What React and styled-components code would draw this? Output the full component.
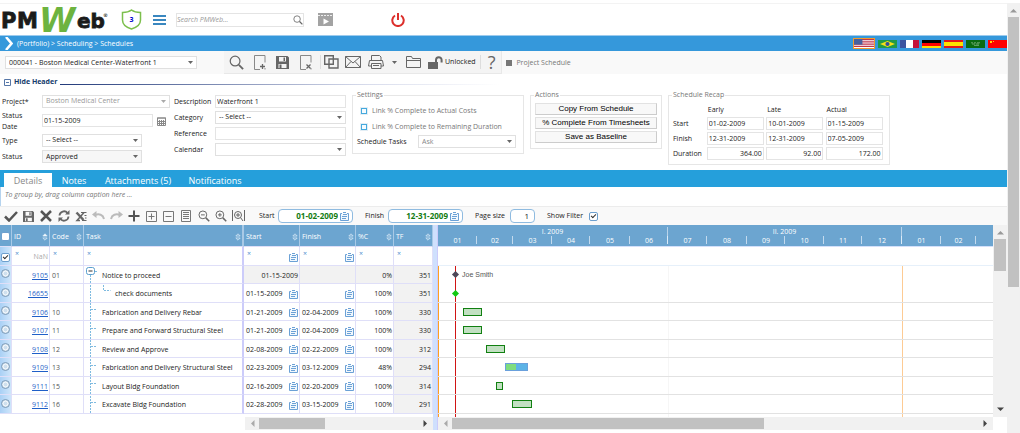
import React from "react";
import styled, { createGlobalStyle } from "styled-components";

const Global = createGlobalStyle`
  *, *::before, *::after { box-sizing: border-box; }
  body { margin: 0; background: #fff; overflow: hidden; }
  body, button, input, select { font: 7px/10px "Open Sans", "Noto Sans", sans-serif; color: #222; }
  table { border-collapse: collapse; }
`;

/* ---------- data ---------- */

const tasks = [
  { id: 9105, code: "01", name: "Notice to proceed", start: "01-15-2009", finish: "", pct: "0%", tf: 351, summary: true },
  { id: 16655, code: "", name: "check documents", start: "01-15-2009", finish: "", pct: "100%", tf: 351, child: true },
  { id: 9106, code: "10", name: "Fabrication and Delivery Rebar", start: "01-21-2009", finish: "02-04-2009", pct: "100%", tf: 330 },
  { id: 9107, code: "11", name: "Prepare and Forward Structural Steel", start: "01-21-2009", finish: "02-04-2009", pct: "100%", tf: 330 },
  { id: 9108, code: "12", name: "Review and Approve", start: "02-08-2009", finish: "02-22-2009", pct: "100%", tf: 312 },
  { id: 9109, code: "13", name: "Fabrication and Delivery Structural Steel", start: "02-23-2009", finish: "03-12-2009", pct: "48%", tf: 294 },
  { id: 9111, code: "15", name: "Layout Bldg Foundation", start: "02-16-2009", finish: "02-20-2009", pct: "100%", tf: 314 },
  { id: 9112, code: "16", name: "Excavate Bldg Foundation", start: "02-28-2009", finish: "03-15-2009", pct: "100%", tf: 291 },
];

const columns = [
  { name: "ID", width: 38, sorted: true },
  { name: "Code", width: 34 },
  { name: "Task", width: 160 },
  { name: "Start", width: 56, date: true },
  { name: "Finish", width: 56, date: true },
  { name: "%C", width: 38 },
  { name: "TF", width: 39 },
];

const DAY = 1.27;
const monthDays = [31, 28, 31, 30, 31, 30, 31, 31, 30, 31, 30, 31, 31, 28];

const dayOf = (date) => {
  const [m, d] = date.split("-").map(Number);
  return monthDays.slice(0, m - 1).reduce((a, b) => a + b, 0) + d - 1;
};
const px = (days) => Math.round(days * DAY);

const months = monthDays.map((n, i) => {
  const from = monthDays.slice(0, i).reduce((a, b) => a + b, 0);
  return {
    label: String((i % 12) + 1).padStart(2, "0"),
    width: px(from + n) - px(from),
    edge: i === 5 || i === 11,
  };
});

/* ---------- icons ---------- */

const Svg = ({ w = 12, h = 12, box, children, ...rest }) => (
  <svg width={w} height={h} viewBox={box || `0 0 ${w} ${h}`} fill="none" stroke="#666" aria-hidden="true" {...rest}>
    {children}
  </svg>
);

const Magnifier = ({ size = 16, mark, stroke = "#666" }) => (
  <Svg w={size} h={size} box="0 0 16 16" stroke={stroke}>
    <circle cx="6.5" cy="6.5" r="5.2" strokeWidth="1.3" />
    <path d="M10.5 10.5L15 15" strokeWidth="2" />
    {mark && <path d={mark} strokeWidth="1.3" />}
  </Svg>
);

const Sheet = ({ mark }) => (
  <Svg w={12} h={15}>
    <path d="M6 14.500H.5V.5h10.500v7M11 14.500v-1.500" stroke="#888" />
    <path d={mark} strokeWidth="1.3" />
  </Svg>
);

const Floppy = ({ size = 13 }) => (
  <Svg w={size} h={size} box="0 0 13 13" stroke="none" fill="#666">
    <path fillRule="evenodd" d="M0 0h11.500l1.500 1.500V13H0zM3 1v4.500h7V1zM2.500 8v4h8V8z" />
    <path d="M7.500 1.500h1.500V5H7.500zM3.500 8.500h2V12h-2z" />
  </Svg>
);

const CalIcon = () => (
  <Svg w={9} h={9} stroke="#6ba1d6">
    <path d="M2 1.500H.5v7h8v-7H7" fill="#f2f8fd" />
    <path d="M3 .5h3M3 2.500h4M2 4.500h5M2 6.500h4" />
  </Svg>
);

const Sort = ({ sorted }) => (
  <Svg w={6} h={8} stroke="#d7e8f6">
    <path d="M.8 3L3 .8 5.200 3z" fill={sorted ? "#fff" : "none"} strokeWidth=".8" />
    <path d="M.8 5L3 7.200 5.200 5z" strokeWidth=".8" />
  </Svg>
);

const Caret = ({ fill = "#666" }) => (
  <Svg w={5} h={3} stroke="none" fill={fill}>
    <path d="M0 0h5L2.500 3z" />
  </Svg>
);

const Arrow = ({ dir, fill = "#444" }) => {
  const turn = { up: 0, right: 90, down: 180, left: 270 }[dir];
  return (
    <Svg w={7} h={7} stroke="none" fill={fill}>
      <path d="M0 5.500h7L3.500 2z" transform={`rotate(${turn} 3.500 3.500)`} />
    </Svg>
  );
};

const flags = [
  { name: "English", art: <><path fill="#fff" d="M0 0h19v8H0z" /><path stroke="#c0354c" d="M0 .5h19M0 2.500h19M0 4.500h19M0 6.500h19" /><path fill="#46609f" d="M0 0h8v5H0z" /></> },
  { name: "Português", art: <><path fill="#1f9a48" d="M0 0h19v8H0z" /><path fill="#f7e017" d="M9.500 1L17 4 9.500 7 2 4z" /><circle cx="9.500" cy="4" r="2.100" fill="#2e4f9b" /></> },
  { name: "Français", art: <><path fill="#3c55a0" d="M0 0h6v8H0z" /><path fill="#fff" d="M6 0h7v8H6z" /><path fill="#c4123a" d="M13 0h6v8h-6z" /></> },
  { name: "Deutsch", art: <><path fill="#000" d="M0 0h19v3H0z" /><path fill="#f00" d="M0 3h19v3H0z" /><path fill="#fd0" d="M0 6h19v2H0z" /></> },
  { name: "Español", art: <><path fill="#e3161b" d="M0 0h19v8H0z" /><path fill="#fde100" d="M0 2h19v4H0z" /></> },
  { name: "العربية", art: <><path fill="#0a6b12" d="M0 0h19v8H0z" /><path stroke="#8fbf92" strokeWidth=".7" d="M5 2.800h2m1 0h2m1 0h3M6 4h3m1 0h3M8 5.400h5" /></> },
  { name: "中文", art: <><path fill="#f00" d="M0 0h19v8H0z" /><path fill="#fd0" d="M2 1h2v2H2zM5 1h1v1H5z" /></> },
];

/* ---------- layout ---------- */

const Shell = styled.div`
  display: flex;
  min-height: 100vh;
  padding-top: 3px;
`;

const Main = styled.main`
  flex: 1;
  min-width: 0;
  border-top: 1px solid #f3f3f3;
`;

const Row = styled.div`
  display: flex;
  align-items: center;
  gap: ${(p) => p.$gap || 0}px;
`;

const TopBar = styled.header`
  display: flex;
  align-items: center;
  height: 31px;
  padding-left: 2px;
`;

const LogoSvg = styled.svg`
  flex: none;
  overflow: visible;
`;

const Shield = styled.span`
  display: grid;
  place-items: center;
  margin: 0 11px 0 13px;
  font-weight: 700;
  color: #00c;
  > * { grid-area: 1 / 1; }
`;

const IconButton = styled.button`
  display: grid;
  place-items: center;
  flex: none;
  width: ${(p) => p.$w || 16}px;
  height: 16px;
  padding: 0;
  border: 0;
  background: none;
  svg { display: block; }
`;

const SearchBox = styled.label`
  display: flex;
  align-items: center;
  width: 128px;
  height: 14px;
  margin: 0 13px 0 10px;
  border: 1px solid #e4e4e4;
  input {
    flex: 1;
    min-width: 0;
    border: 0;
    padding: 0;
    background: none;
    font-style: italic;
    &::placeholder { color: #999; }
  }
`;

const Power = styled.button`
  display: grid;
  margin-left: 58px;
  padding: 0;
  border: 0;
  background: none;
`;

const CrumbBar = styled.nav`
  display: flex;
  align-items: center;
  gap: 4px;
  height: 16px;
  padding-left: 5px;
  border-top: 1px solid #9ccbee;
  background: #3598db;
  color: #fff;
  white-space: nowrap;
  a { color: inherit; text-decoration: none; }
`;

const Flags = styled.div`
  display: flex;
  align-items: center;
  gap: 3px;
  margin-left: auto;
  overflow: hidden;
`;

const Flag = styled.button`
  flex: none;
  padding: 0;
  border: ${(p) => (p.$on ? "1px solid #f39a2b" : 0)};
  background: none;
  svg { display: block; }
`;

const RecordBar = styled.div`
  display: flex;
  align-items: center;
  height: 23px;
  padding-left: 5px;
  background: #f9f9f9;
`;

const RecordTools = styled.div`
  display: flex;
  align-items: center;
  height: 23px;
  margin-left: 27px;
  padding: 0 6px 0 4px;
  background: #f4f4f4;
  border: solid #e8e8e8;
  border-width: 0 1px 1px 0;
`;

const ToolSep = styled.span`
  width: 1px;
  height: 14px;
  background: #ddd;
`;

const Help = styled.button`
  margin-left: 4px;
  padding: 0 0 0 7px;
  border: 0;
  border-left: 1px solid #ddd;
  background: none;
  color: #666;
  font-size: 18px;
  line-height: 14px;
`;

const ViewName = styled.span`
  display: flex;
  align-items: center;
  gap: 4px;
  margin-left: 4px;
  color: #777;
  white-space: nowrap;
  &::before { content: ""; width: 6px; height: 6px; background: #777; }
`;

const HideHeader = styled.button`
  display: flex;
  align-items: center;
  gap: 3px;
  width: 500px;
  height: 16px;
  padding: 0 0 0 4px;
  border: 0;
  background: none;
  color: #123a6b;
  font-weight: 700;
  white-space: nowrap;
  &::after {
    content: "";
    flex: 1;
    height: 1px;
    margin-top: 5px;
    background: linear-gradient(90deg, #223a7a, #d8dcec 70%, #fff);
  }
`;

const Form = styled.form`
  display: flex;
  align-items: flex-start;
  height: 80px;
  padding: 1px 0 0 2px;
`;

const Fields = styled.div`
  display: grid;
  grid-template-columns: ${(p) => p.$cols};
  grid-template-rows: ${(p) => p.$rows};
  grid-auto-rows: 16px;
  align-items: center;
  margin-right: ${(p) => p.$after}px;
  padding-top: 2px;
  label { white-space: ${(p) => (p.$wrap ? "normal" : "nowrap")}; line-height: 11px; }
`;

const DateLabel = styled.label`
  width: 24px;
`;

const Input = styled.input`
  width: ${(p) => (p.$w ? `${p.$w}px` : "100%")};
  height: 13px;
  padding: 0 1px;
  border: 1px solid #e4e4e4;
  background: #fff;
  text-align: ${(p) => (p.$right ? "right" : "left")};
`;

const SelectWrap = styled.span`
  display: grid;
  align-items: center;
  width: ${(p) => (p.$w ? `${p.$w}px` : "100%")};
  > * { grid-area: 1 / 1; }
  > svg { justify-self: end; margin-right: 4px; pointer-events: none; }
  select {
    appearance: none;
    width: 100%;
    height: 13px;
    padding: 0 3px;
    border: 1px solid #e0e0e0;
    border-radius: 0;
    background: ${(p) => (p.$grey ? "#f7f7f7" : "#fff")};
    color: ${(p) => p.$color || "#222"};
  }
`;

const Select = ({ id, value, label, w, color, grey }) => (
  <SelectWrap $w={w} $color={color} $grey={grey}>
    <select id={id} aria-label={label} defaultValue={value}>
      <option>{value}</option>
    </select>
    <Caret fill={color === "#999" ? "#aaa" : "#666"} />
  </SelectWrap>
);

const Group = styled.fieldset`
  display: flex;
  flex-direction: column;
  min-width: 0;
  width: ${(p) => p.$w}px;
  height: ${(p) => p.$h}px;
  margin: 0 6px 0 0;
  padding: 4px 4px 0;
  border: 1px solid #e6e6e6;
  legend { padding: 0 1px; margin-left: -1px; color: #777; height: 8px; line-height: 8px; }
`;

const CheckLabel = styled.label`
  display: flex;
  align-items: center;
  gap: 5px;
  height: 16px;
  padding-left: 4px;
  color: #777;
  white-space: nowrap;
  input {
    appearance: none;
    width: 6px;
    height: 6px;
    margin: 0;
    border: 1px solid #45a9dd;
    background: #f4fbff;
    outline: 1px solid #e3eef5;
  }
`;

const TasksLabel = styled.label`
  width: 61px;
  white-space: nowrap;
`;

const ActionButton = styled.button`
  height: 12px;
  margin-bottom: 2px;
  padding: 0;
  border: 1px solid #ccc;
  border-top-color: #e2e2e2;
  border-left-color: #e2e2e2;
  background: #f8f8f8;
  color: #000;
  font: 8px/10px "Liberation Sans", Arial, sans-serif;
  white-space: nowrap;
`;

const Recap = styled.table`
  th { padding: 0; font-weight: 400; text-align: left; }
  th:first-child { width: 35px; }
  th + th { padding-left: 1px; }
  td { width: 60px; height: 15px; padding: 0; }
  thead th { height: 13px; }
`;

const Tabs = styled.div`
  display: flex;
  align-items: flex-end;
  height: 17px;
  padding-left: 4px;
  background: #259fdb;
`;

const Tab = styled.button`
  width: ${(p) => p.$w}px;
  height: 14px;
  padding: 0;
  border: 0;
  background: ${(p) => (p.$on ? "#fff" : "none")};
  color: ${(p) => (p.$on ? "#888" : "#fff")};
  font-size: 9px;
  line-height: 16px;
  white-space: nowrap;
`;

const GroupHint = styled.div`
  height: 19px;
  padding: 3px 4px;
  border-left: 1px solid #b5d3ee;
  color: #777;
  font-style: italic;
`;

const GridTools = styled.div`
  display: flex;
  align-items: center;
  height: 19px;
  padding-left: 3px;
  border-top: 1px solid #ececec;
  background: #f9f9f9;
  white-space: nowrap;
`;

const ToolStrip = styled.div`
  display: flex;
  justify-content: space-between;
  width: 244px;
  margin-right: 12px;
`;

const ToolLabel = styled.label`
  width: ${(p) => p.$w}px;
`;

const Picker = styled.span`
  display: flex;
  align-items: center;
  width: ${(p) => p.$w || 75}px;
  height: 14px;
  margin-right: 12px;
  padding: 0 3px;
  border: 1px solid #8fbbe0;
  border-radius: 4px;
  background: #fff;
  input {
    flex: 1;
    min-width: 0;
    padding: 0 2px 0 0;
    border: 0;
    background: none;
    font-size: 8px;
    text-align: right;
    color: ${(p) => (p.$plain ? "#222" : "#127c12")};
    font-weight: ${(p) => (p.$plain ? 400 : 700)};
  }
`;

const Tick = styled.input`
  appearance: none;
  display: grid;
  place-items: center;
  width: 9px;
  height: 9px;
  margin: 0;
  border: 1px solid #6c9fce;
  border-radius: 2px;
  background: #fff;
  &:checked::after {
    content: "";
    width: 5px;
    height: 3px;
    border: solid #333;
    border-width: 0 0 1px 1px;
    rotate: -45deg;
    margin-bottom: 1px;
  }
`;

const Planner = styled.div`
  display: flex;
`;

const Pane = styled.div`
  flex: ${(p) => (p.$grow ? 1 : "none")};
  min-width: 0;
  overflow: hidden;
`;

const TaskTable = styled.table`
  width: 433px;
  table-layout: fixed;
  border-collapse: separate;
  border-spacing: 0;

  th, td {
    padding: 2px 1px 0 2px;
    overflow: hidden;
    white-space: nowrap;
    text-align: left;
    font-weight: 400;
    border-right: 1px solid #dfdff8;
    border-bottom: 1px solid #dfdff8;
  }
  tr > :nth-child(4) { border-right: 2px solid #ccccfa; }
  tr > :first-child { padding: 2px 1px 0; }
  thead tr:first-child { height: 22px; }
  thead tr:first-child th { background: #6ca5d0; color: #fff; border-right-color: #a8c9e6; }
  thead tr + tr { height: 19px; }
  tbody tr { height: 18px; }
  tbody tr:nth-child(even) { height: 19px; }
  tbody td:nth-child(3) { color: #555; }
  tbody td:nth-child(2), tbody td:nth-child(7), tbody td:nth-child(8) { text-align: right; }
  tbody td:last-child { background: #f2f2f2; }
  tbody td:first-child, thead tr + tr td:first-child { background: linear-gradient(90deg, #a9d0f5, #cfe6fb); }
  tbody tr:first-child td:nth-child(n + 5) { background: #f2f2f2; }
  a { color: #1f5fc8; }
`;

const HeadCell = styled.span`
  display: flex;
  align-items: center;
  justify-content: space-between;
`;

const FilterCell = styled.span`
  display: flex;
  justify-content: space-between;
  align-items: center;
  height: 14px;
  color: #aaa;
  i { align-self: flex-start; color: #4f8fce; font-style: normal; line-height: 7px; padding-left: 1px; }
`;

const TaskName = styled.span`
  display: flex;
  align-items: center;
  height: 15px;
  svg { flex: none; margin-right: 2px; }
`;

const DateCell = styled.span`
  display: flex;
  align-items: center;
  justify-content: ${(p) => (p.$end ? "flex-end" : "space-between")};
`;

const RadioMark = styled.input`
  appearance: none;
  display: block;
  width: 9px;
  height: 9px;
  margin: 0 0 4px;
  border: 1px solid #7f9db9;
  border-radius: 50%;
  background: radial-gradient(#cfe0ee 35%, #f2f7fb 45%, #a9c3da);
`;

const Splitter = styled.div`
  width: 5px;
  background: #cfe0fd;
  border-right: 1px solid #ccccfa;
`;

const TimeHead = styled.div`
  height: 22px;
  background: #6ca5d0;
  border-bottom: 1px solid #d3e0fb;
  color: #fff;
  overflow: hidden;
`;

const Halves = styled.div`
  display: flex;
  height: 11px;
  padding-top: 2px;
  text-align: center;
`;

const Half = styled.span`
  flex: none;
  width: ${(p) => p.$w}px;
  line-height: 9px;
  border-right: 1px solid #b8d3ea;
`;

const Months = styled.div`
  display: flex;
  height: 8px;
  line-height: 9px;
  text-align: center;
`;

const Month = styled.span`
  flex: none;
  padding-left: 1px;
  border-right: 1px solid ${(p) => (p.$edge ? "#dcebf8" : "#c3daee")};
`;

const TimeFilter = styled.div`
  height: 19px;
  border-bottom: 1px solid #e6f0fa;
`;

const Chart = styled.div`
  position: relative;
  height: 151px;
  overflow: hidden;
`;

const Marker = styled.span`
  position: absolute;
  top: 0;
  bottom: 0;
  width: 1px;
  background: ${(p) => p.$color};
`;

const Lanes = styled.div`
  position: relative;
`;

const Lane = styled.div`
  display: flex;
  align-items: center;
  height: 18px;
  border-bottom: 1px solid ${(p) => (p.$line ? "#e2e2e2" : "transparent")};
  &:nth-child(even) { height: 19px; }
`;

const Bar = styled.span`
  display: flex;
  height: 8px;
  border: 1px solid ${(p) => (p.$open ? "#6aa0dc" : "#118011")};
  background: ${(p) => (p.$open ? "#5cb3e6" : "#c2e0c2")};
  > i { background: #7edc7e; }
`;

const Milestone = styled.span`
  width: 5px;
  height: 5px;
  background: ${(p) => p.$color};
  rotate: 45deg;
`;

const Resource = styled.span`
  margin-left: 4px;
  color: #555;
  font-family: "Liberation Sans", Arial, sans-serif;
`;

const HScroll = styled.div`
  display: flex;
  align-items: center;
  justify-content: space-between;
  height: 13px;
  margin: ${(p) => p.$margin};
  padding: 0 4px;
  background: #f1f1f1;
  gap: 3px;
`;

const Thumb = styled.span`
  height: 11px;
  width: ${(p) => p.$w};
  background: #c1c1c1;
  margin-right: auto;
`;

const VScroll = styled.div`
  display: flex;
  flex-direction: column;
  align-items: center;
  flex: none;
  gap: 3px;
  width: ${(p) => p.$w}px;
  height: ${(p) => p.$h};
  padding: 4px 1px;
  background: #f1f1f1;
  > svg { flex: none; }
  > span {
    width: 100%;
    height: ${(p) => p.$thumb};
    margin-bottom: auto;
    background: #c1c1c1;
  }
`;

/* ---------- pieces ---------- */

const Logo = () => (
  <LogoSvg width="106" height="28" viewBox="0 0 106 28" role="img" aria-label="PMWeb">
    <g fontFamily="DejaVu Sans, sans-serif" fontWeight="700">
      <g fontSize="21" fill="#1b1b1b" stroke="#1b1b1b" strokeWidth=".8">
        <text x="-1" y="22">P</text>
        <text x="15" y="22">M</text>
        <text x="75" y="22" fontSize="20">eb</text>
      </g>
      <text x="37" y="26" fontSize="33" fill="#6db33f" fontStyle="italic">W</text>
      <text x="101" y="11" fontSize="5" fill="#333">®</text>
    </g>
  </LogoSvg>
);

const Tree = ({ kind }) => (
  <Svg w={kind === "child" ? 27 : 14} h={19} stroke="#7fbbe0">
    {kind === "root" && (
      <>
        <rect x=".5" y="1.500" width="8" height="7" rx="2" fill="#fff" stroke="#5b9fce" />
        <path d="M2.500 5h4" stroke="#333" />
        <path d="M9 5.500h3M4.500 9v10" strokeDasharray="2 1" />
      </>
    )}
    {kind === "child" && <path d="M4.500 0v19M17.500 0v5.500h7" strokeDasharray="2 1" />}
    {kind === "leaf" && <path d="M4.500 0v19M5 6.500h6" strokeDasharray="2 1" />}
  </Svg>
);

const gridTools = [
  { name: "Apply", icon: <Svg w={14} h={12} stroke="#555"><path d="M1 6.500l4 4L13 2" strokeWidth="2.500" /></Svg> },
  { name: "Save", icon: <Floppy size={11} /> },
  { name: "Delete", icon: <Svg stroke="#555"><path d="M1 1l10 10M11 1L1 11" strokeWidth="2.500" /></Svg> },
  { name: "Refresh", icon: <Svg><path d="M1.500 5.500A4.500 4.500 0 0 1 9.500 3M10.500 6.500A4.500 4.500 0 0 1 2.500 9" strokeWidth="1.800" /><path d="M11.500 0v4.500H7zM.5 12V7.500H5z" fill="#666" stroke="none" /></Svg> },
  { name: "Export", icon: <Svg><path d="M1.500 2.500l7 7.500" strokeWidth="2.500" /><path d="M9 2.500L2 10.500h3" strokeWidth="1.500" /><path d="M6 2.500h5.500M9.500 5.500h2M10 8h1.500M7 10.500h4.500" /></Svg> },
  { name: "Undo", icon: <Svg w={13} stroke="#bbb"><path d="M3 5c4-1.500 8-.5 9 4" strokeWidth="2" /><path d="M0 4.500L4.500 1v7z" fill="#bbb" stroke="none" /></Svg> },
  { name: "Redo", icon: <Svg w={13} stroke="#bbb"><path d="M10 5C6 3.500 2 4.500 1 9" strokeWidth="2" /><path d="M13 4.500L8.500 1v7z" fill="#bbb" stroke="none" /></Svg> },
  { name: "Add", icon: <Svg stroke="#555"><path d="M6 .5v11M.5 6h11" strokeWidth="2" /></Svg> },
  { name: "Expand", icon: <Svg w={11} h={11} stroke="#777"><path d="M.5 .5h10v10H.5zM5.500 2.500v6M2.500 5.500h6" /></Svg> },
  { name: "Collapse", icon: <Svg w={11} h={11} stroke="#777"><path d="M.5 .5h10v10H.5zM2.500 5.500h6" /></Svg> },
  { name: "Report", icon: <Svg w={10} stroke="#777"><path d="M.5 .5h9v11h-9zM2 2.500h6M2 4.500h6M2 6.500h6M2 8.500h6" /></Svg> },
  { name: "Zoom out", icon: <Magnifier size={12} mark="M4 6.500h5" /> },
  { name: "Zoom in", icon: <Magnifier size={12} mark="M4 6.500h5M6.500 4v5" /> },
  { name: "Zoom to fit", icon: <Svg w={13}><circle cx="6" cy="5" r="3.500" /><path d="M4 5h4M6 3v4M8.500 7.500L11 11M.5 0v11M12.500 0v11" /></Svg> },
];

const Header = () => (
  <>
    <TopBar>
      <Logo />
      <Shield>
        <Svg w={21} h={21} stroke="#7cbf4c">
          <path d="M10.500 1c2.500 2 5.500 2.600 9 2.600v7.400c0 5-4 7.500-9 9-5-1.500-9-4-9-9V3.600c3.500 0 6.500-.6 9-2.600z" strokeWidth="1.500" />
        </Svg>
        <span>3</span>
      </Shield>
      <IconButton $w={13} aria-label="Menu">
        <Svg w={13} h={10} stroke="#3a87bf"><path d="M0 1h13M0 5h13M0 9h13" strokeWidth="2" /></Svg>
      </IconButton>
      <SearchBox>
        <input placeholder="Search PMWeb..." aria-label="Search PMWeb" />
        <Magnifier size={10} />
      </SearchBox>
      <IconButton aria-label="Videos">
        <Svg w={15} h={13} stroke="none" fill="#a3a3a3">
          <path d="M0 0h15v13H0z" />
          <path d="M0 2.500h15" stroke="#eee" strokeDasharray="2 1" />
          <path d="M5.500 5.500L11 8.500l-5.500 3z" fill="#fff" />
        </Svg>
      </IconButton>
      <Power aria-label="Log out">
        <Svg w={14} h={14} stroke="#dc2f2b"><path d="M4 2.500a5.700 5.700 0 1 0 6 0M7 0v7" strokeWidth="2" /></Svg>
      </Power>
    </TopBar>
    <CrumbBar>
      <Svg w={8} h={13} stroke="#fff"><path d="M1 0l5.500 6.500L1 13" strokeWidth="2.500" /></Svg>
      <span>
        <a href="#portfolio">(Portfolio)</a> &gt; <a href="#scheduling">Scheduling</a> &gt; <a href="#schedules">Schedules</a>
      </span>
      <Flags>
        {flags.map((f, i) => (
          <Flag key={f.name} $on={i === 0} aria-label={f.name}>
            <Svg w={i ? 19 : 20} h={i ? 8 : 9} box="0 0 19 8" stroke="none" preserveAspectRatio="none">{f.art}</Svg>
          </Flag>
        ))}
      </Flags>
    </CrumbBar>
    <RecordBar>
      <Select label="Schedule record" value="000041 - Boston Medical Center-Waterfront 1" w={192} />
      <RecordTools>
        <IconButton $w={17} aria-label="Find"><Magnifier size={15} /></IconButton>
        <IconButton $w={29} aria-label="New"><Sheet mark="M8.500 9v5M6 11.500h5" /></IconButton>
        <IconButton $w={17} aria-label="Save"><Floppy /></IconButton>
        <IconButton $w={29} aria-label="Remove"><Sheet mark="M6.500 9.500l4 4M10.500 9.500l-4 4" /></IconButton>
        <ToolSep />
        <IconButton $w={20} aria-label="Copy">
          <Svg w={15} h={14}><path d="M.7 .7h8.600v8.600H.7zM5 4h9v9H5z" strokeWidth="1.400" /></Svg>
        </IconButton>
        <IconButton $w={24} aria-label="Mail">
          <Svg w={16} h={12}><path d="M.5 .5h15v11H.5zM.5 .5L8 7 15.500 .5M.5 11.500l5.500-6M15.500 11.500L10 5.500" /></Svg>
        </IconButton>
        <IconButton $w={22} aria-label="Print">
          <Svg w={16} h={14}><path d="M3.500 5V.5h8L13 2v3M1.500 5.500h13L15.500 11h-2.500M3 11H.5l1-5.500" /><path d="M3.500 8.500h9.500v5H3.500zM5 10.500h6" /></Svg>
        </IconButton>
        <IconButton $w={14} aria-label="Print options"><Caret /></IconButton>
        <IconButton $w={24} aria-label="Folder">
          <Svg w={15} h={12}><path d="M.5 11.500V.5h5l1 2h8v9zM.5 4.500h14" /></Svg>
        </IconButton>
        <IconButton $w={20} aria-label="Lock">
          <Svg w={15} h={13} stroke="none" fill="#666"><path d="M0 6h10v7H0z" /><path d="M8 6.500V4a2.800 2.800 0 0 1 5.600 0v2.500" fill="none" stroke="#666" strokeWidth="2" /></Svg>
        </IconButton>
        <span>Unlocked</span>
        <Help aria-label="Help">?</Help>
      </RecordTools>
      <ViewName>Project Schedule</ViewName>
    </RecordBar>
  </>
);

const Details = () => (
  <Form>
    <Fields $wrap $cols="40px 128px" $rows="16px 23px 16px 17px" $after={4}>
      <label htmlFor="project">Project*</label>
      <Select id="project" value="Boston Medical Center" color="#999" />
      <DateLabel htmlFor="status-date">Status Date</DateLabel>
      <Row $gap={4}>
        <Input id="status-date" defaultValue="01-15-2009" $w={111} />
        <Svg w={9} h={10} stroke="#888"><path d="M.5 2h8v7.500h-8zM0 2h9M2.500 4v5M4.500 4v5M6.500 4v5M1 5.500h7M1 7.500h7" /></Svg>
      </Row>
      <label htmlFor="type">Type</label>
      <Select id="type" value="-- Select --" w={100} />
      <label htmlFor="status">Status</label>
      <Select id="status" value="Approved" w={100} grey />
    </Fields>
    <Fields $cols="41px 131px" $after={6}>
      <label htmlFor="description">Description</label>
      <Input id="description" defaultValue="Waterfront 1" />
      <label htmlFor="category">Category</label>
      <Select id="category" value="-- Select --" />
      <label htmlFor="reference">Reference</label>
      <Input id="reference" />
      <label htmlFor="calendar">Calendar</label>
      <Select id="calendar" value="" />
    </Fields>
    <Group $w={172} $h={63}>
      <legend>Settings</legend>
      <CheckLabel><input type="checkbox" />Link % Complete to Actual Costs</CheckLabel>
      <CheckLabel><input type="checkbox" />Link % Complete to Remaining Duration</CheckLabel>
      <Row>
        <TasksLabel htmlFor="sched-tasks">Schedule Tasks</TasksLabel>
        <Select id="sched-tasks" value="Ask" w={98} color="#888" />
      </Row>
    </Group>
    <Group $w={132} $h={58}>
      <legend>Actions</legend>
      <ActionButton type="button">Copy From Schedule</ActionButton>
      <ActionButton type="button">% Complete From Timesheets</ActionButton>
      <ActionButton type="button">Save as Baseline</ActionButton>
    </Group>
    <Group $w={222} $h={74}>
      <legend>Schedule Recap</legend>
      <Recap>
        <thead>
          <tr><th /><th>Early</th><th>Late</th><th>Actual</th></tr>
        </thead>
        <tbody>
          {[
            ["Start", "01-02-2009", "10-01-2009", "01-15-2009"],
            ["Finish", "12-31-2009", "12-31-2009", "07-05-2009"],
            ["Duration", "364.00", "92.00", "172.00"],
          ].map(([name, ...values]) => (
            <tr key={name}>
              <th>{name}</th>
              {values.map((v, i) => (
                <td key={i}>
                  <Input aria-label={name} defaultValue={v} $w={57} $right={name === "Duration"} />
                </td>
              ))}
            </tr>
          ))}
        </tbody>
      </Recap>
    </Group>
  </Form>
);

const Grid = () => (
  <Pane>
    <TaskTable>
      <colgroup>
        <col style={{ width: 12 }} />
        {columns.map((c) => <col key={c.name} style={{ width: c.width }} />)}
      </colgroup>
      <thead>
        <tr>
          <th><Tick type="checkbox" aria-label="Select all" /></th>
          {columns.map((c) => (
            <th key={c.name}><HeadCell>{c.name}<Sort sorted={c.sorted} /></HeadCell></th>
          ))}
        </tr>
        <tr>
          <td><Tick type="checkbox" defaultChecked aria-label="Filter on" /></td>
          {columns.map((c) => (
            <td key={c.name}>
              <FilterCell>
                <i>×</i>
                {c.name === "ID" && <span>NaN</span>}
                {c.date && <CalIcon />}
              </FilterCell>
            </td>
          ))}
        </tr>
      </thead>
      <tbody>
        {tasks.map((t) => (
          <tr key={t.id}>
            <td><RadioMark type="radio" name="row" aria-label={t.name} /></td>
            <td><a href={`#${t.id}`}>{t.id}</a></td>
            <td>{t.code}</td>
            <td>
              <TaskName><Tree kind={t.summary ? "root" : t.child ? "child" : "leaf"} />{t.name}</TaskName>
            </td>
            <td><DateCell $end={t.summary}>{t.start}{!t.summary && <CalIcon />}</DateCell></td>
            <td><DateCell $end={!t.finish}>{t.finish}{!t.summary && <CalIcon />}</DateCell></td>
            <td>{t.pct}</td>
            <td>{t.tf}</td>
          </tr>
        ))}
      </tbody>
    </TaskTable>
    <HScroll $margin="3px 0 0 245px">
      <Arrow dir="left" fill="#aaa" /><Thumb $w="66px" /><Arrow dir="right" />
    </HScroll>
  </Pane>
);

const Gantt = () => (
  <Pane $grow>
    <TimeHead>
      <Halves>
        <Half $w={px(181)}>I. 2009</Half>
        <Half $w={px(365) - px(181)}>II. 2009</Half>
      </Halves>
      <Months>
        {months.map((m, i) => (
          <Month key={i} $edge={m.edge} style={{ width: m.width }}>{m.label}</Month>
        ))}
      </Months>
    </TimeHead>
    <TimeFilter />
    <Chart>
      <Marker $color="#ffa01e" style={{ left: 0 }} />
      <Marker $color="#f6f6f6" style={{ left: px(181) }} />
      <Marker $color="#fdcb94" style={{ left: px(365) }} />
      <Marker $color="#d01414" style={{ left: px(13.5) }} />
      <Lanes>
        {tasks.map((t, i) => {
          const from = px(dayOf(t.start));
          if (!t.finish) {
            return (
              <Lane key={t.id} $line={i > 0}>
                <Milestone $color={t.summary ? "#4d4757" : "#12c912"} style={{ marginLeft: from - 3 }} />
                {t.summary && <Resource>Joe Smith</Resource>}
              </Lane>
            );
          }
          const open = t.pct !== "100%";
          return (
            <Lane key={t.id} $line>
              <Bar $open={open} style={{ marginLeft: from, width: px(dayOf(t.finish) + 1) - from }}>
                {open && <i style={{ width: t.pct }} />}
              </Bar>
            </Lane>
          );
        })}
      </Lanes>
    </Chart>
    <HScroll $margin="0">
      <Arrow dir="left" fill="#aaa" /><Thumb $w="57%" /><Arrow dir="right" />
    </HScroll>
  </Pane>
);

export default function App() {
  return (
    <>
      <Global />
      <Shell>
        <Main>
          <Header />
          <HideHeader>
            <Svg w={7} h={7} stroke="#5677a8"><path d="M.5 .5h6v6h-6zM2 3.500h3" /></Svg>
            Hide Header
          </HideHeader>
          <Details />
          <Tabs>
            <Tab $on $w={48}>Details</Tab>
            <Tab $w={44}>Notes</Tab>
            <Tab $w={84}>Attachments (5)</Tab>
            <Tab $w={70}>Notifications</Tab>
          </Tabs>
          <GroupHint>To group by, drag column caption here ...</GroupHint>
          <GridTools>
            <ToolStrip>
              {gridTools.map((t) => (
                <IconButton key={t.name} aria-label={t.name}>{t.icon}</IconButton>
              ))}
            </ToolStrip>
            <ToolLabel $w={19} htmlFor="g-start">Start</ToolLabel>
            <Picker><input id="g-start" defaultValue="01-02-2009" /><CalIcon /></Picker>
            <ToolLabel $w={23} htmlFor="g-finish">Finish</ToolLabel>
            <Picker><input id="g-finish" defaultValue="12-31-2009" /><CalIcon /></Picker>
            <ToolLabel $w={35} htmlFor="g-size">Page size</ToolLabel>
            <Picker $w={25} $plain><input id="g-size" defaultValue="1" /></Picker>
            <ToolLabel $w={42} htmlFor="g-filter">Show Filter</ToolLabel>
            <Tick id="g-filter" type="checkbox" defaultChecked />
          </GridTools>
          <Planner>
            <Grid />
            <Splitter />
            <Gantt />
            <VScroll $w={14} $h="192px" $thumb="32px">
              <Arrow dir="up" fill="#999" /><span /><Arrow dir="down" />
            </VScroll>
          </Planner>
        </Main>
        <VScroll $w={13} $h="calc(100vh - 3px)" $thumb="64%">
          <Arrow dir="up" fill="#999" /><span />
        </VScroll>
      </Shell>
    </>
  );
}
